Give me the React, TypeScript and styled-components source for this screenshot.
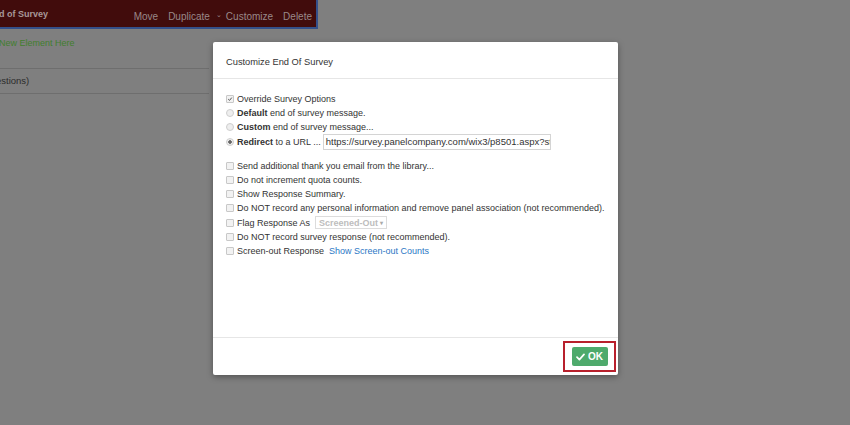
import React from "react";
import styled, { createGlobalStyle } from "styled-components";

const GlobalStyle = createGlobalStyle`
    html, body {
        margin: 0;
        padding: 0;
        background: #7f7f7f;
        font-family: "Liberation Sans", Arial, sans-serif;
    }
`;

type Option = {
    kind: "check" | "radio";
    checked?: boolean;
    bold?: string;
    text: string;
};

const topOptions: Option[] = [
    { kind: "check", checked: true, text: "Override Survey Options" },
    { kind: "radio", bold: "Default", text: " end of survey message." },
    { kind: "radio", bold: "Custom", text: " end of survey message..." },
];

const moreOptions: string[] = [
    "Send additional thank you email from the library...",
    "Do not increment quota counts.",
    "Show Response Summary.",
    "Do NOT record any personal information and remove panel association (not recommended).",
];

const CheckMark = () => (
    <svg width="9" height="8" viewBox="0 0 9 8">
        <path d="M1 4.2 L3.4 6.6 L8 1.4" fill="none" stroke="#fff" strokeWidth="1.7" strokeLinecap="round" strokeLinejoin="round" />
    </svg>
);

const TinyTick = () => (
    <svg width="6" height="6" viewBox="0 0 6 6">
        <path d="M1.2 3.1 L2.5 4.4 L4.8 1.6" fill="none" stroke="#555" strokeWidth="1" />
    </svg>
);

const App = () => {
    return (
        <Page>
            <GlobalStyle />
            <Backdrop>
                <BlockHeader>
                    <BlockTitle>d of Survey</BlockTitle>
                    <BlockActions>
                        <span>Move</span>
                        <span>Duplicate</span>
                        <Customize>
                            <Chevron>⌄</Chevron>
                            Customize
                        </Customize>
                        <span>Delete</span>
                    </BlockActions>
                </BlockHeader>
                <AddElement>New Element Here</AddElement>
                <BlockRow>estions)</BlockRow>
            </Backdrop>

            <Modal>
                <ModalHeader>Customize End Of Survey</ModalHeader>
                <ModalBody>
                    <Group>
                        {topOptions.map((opt) => (
                            <Row key={opt.text}>
                                {opt.kind === "check" ? (
                                    <Box>{opt.checked && <TinyTick />}</Box>
                                ) : (
                                    <Radio />
                                )}
                                <span>
                                    {opt.bold && <b>{opt.bold}</b>}
                                    {opt.text}
                                </span>
                            </Row>
                        ))}
                        <Row>
                            <Radio selected />
                            <span>
                                <b>Redirect</b> to a URL ...
                            </span>
                            <UrlInput>https://survey.panelcompany.com/wix3/p8501.aspx?sta</UrlInput>
                        </Row>
                    </Group>
                    <Group>
                        {moreOptions.map((t) => (
                            <Row key={t}>
                                <Box />
                                <span>{t}</span>
                            </Row>
                        ))}
                        <Row>
                            <Box />
                            <span>Flag Response As</span>
                            <Select>
                                Screened-Out <Caret>▾</Caret>
                            </Select>
                        </Row>
                        <Row>
                            <Box />
                            <span>Do NOT record survey response (not recommended).</span>
                        </Row>
                        <Row>
                            <Box />
                            <span>Screen-out Response</span>
                            <Link>Show Screen-out Counts</Link>
                        </Row>
                    </Group>
                </ModalBody>
                <ModalFooter>
                    <Highlight>
                        <OkButton>
                            <CheckMark />
                            OK
                        </OkButton>
                    </Highlight>
                </ModalFooter>
            </Modal>
        </Page>
    );
};

export default App;

const Page = styled.div`
    position: relative;
    width: 850px;
    height: 425px;
    overflow: hidden;
    background: #7f7f7f;
`;

const Backdrop = styled.div`
    display: flex;
    flex-direction: column;
    width: 320px;
`;

const BlockHeader = styled.div`
    display: flex;
    align-items: stretch;
    justify-content: space-between;
    height: 27px;
    width: 316px;
    background: #410c0c;
    border-right: 2px solid #34508a;
    border-bottom: 2px solid #34508a;
`;

const BlockTitle = styled.span`
    display: flex;
    align-items: center;
    padding-top: 1px;
    font-size: 9px;
    font-weight: 700;
    color: #a89898;
    margin-left: -1px;
`;

const BlockActions = styled.div`
    display: flex;
    align-items: flex-end;
    padding-bottom: 5px;
    gap: 10px;
    font-size: 10px;
    color: #998989;
    margin-right: 4px;
`;

const Customize = styled.span`
    display: flex;
    align-items: flex-end;
    gap: 4px;
    margin-left: -4px;
`;

const Chevron = styled.span`
    font-size: 7px;
    position: relative;
    top: -3px;
`;

const AddElement = styled.div`
    margin-top: 9px;
    height: 24px;
    font-size: 9px;
    color: #427e2e;
    margin-left: -1px;
`;

const BlockRow = styled.div`
    border-top: 1px solid #6e6e6e;
    border-bottom: 1px solid #6e6e6e;
    margin-top: 6px;
    height: 24px;
    width: 213px;
    line-height: 24px;
    font-size: 9.5px;
    color: #2c2c2c;
    margin-left: -4px;
`;

const Modal = styled.div`
    position: absolute;
    left: 213px;
    top: 42px;
    width: 405px;
    height: 333px;
    background: #fff;
    border-radius: 2px;
    box-shadow: 0 2px 6px rgba(0, 0, 0, 0.35);
    display: flex;
    flex-direction: column;
    color: #333;
`;

const ModalHeader = styled.div`
    height: 37px;
    display: flex;
    align-items: center;
    padding: 4px 13px 0;
    box-sizing: border-box;
    font-size: 9.3px;
    color: #333;
    border-bottom: 1px solid #e6e6e6;
`;

const ModalBody = styled.div`
    flex: 1;
    display: flex;
    flex-direction: column;
    gap: 10px;
    padding: 13px 13px 0;
    border-bottom: 1px solid #e6e6e6;
`;

const Group = styled.div`
    display: flex;
    flex-direction: column;
`;

const Row = styled.div`
    display: flex;
    align-items: center;
    height: 14.2px;
    font-size: 9px;
    color: #333;
    white-space: nowrap;
    b {
        font-weight: 700;
    }
`;

const Box = styled.span`
    display: flex;
    align-items: center;
    justify-content: center;
    width: 6px;
    height: 6px;
    margin-right: 3px;
    border: 1px solid #c8c8c8;
    border-radius: 1px;
    background: #f2f2f2;
    flex-shrink: 0;
`;

const Radio = styled.span<{ selected?: boolean }>`
    width: 6px;
    height: 6px;
    margin-right: 3px;
    border: 1px solid #cfcfcf;
    border-radius: 50%;
    background: ${(p) => (p.selected ? "radial-gradient(circle, #666 0 1.5px, #eee 2px)" : "#eee")};
    flex-shrink: 0;
`;

const UrlInput = styled.span`
    margin-left: 2px;
    height: 16px;
    width: 228px;
    padding: 0 2px;
    box-sizing: border-box;
    border: 1px solid #d4d4d4;
    display: flex;
    align-items: center;
    overflow: hidden;
    font-size: 9.5px;
    color: #333;
`;

const Select = styled.span`
    margin-left: 5px;
    height: 13px;
    width: 72px;
    box-sizing: border-box;
    border: 1px solid #dcdcdc;
    padding: 0 3px;
    display: flex;
    align-items: center;
    justify-content: space-between;
    color: #bdbdbd;
    font-weight: 700;
    font-size: 9px;
`;

const Caret = styled.span`
    font-size: 6px;
    color: #aaa;
`;

const Link = styled.span`
    margin-left: 5px;
    color: #2b77c5;
`;

const ModalFooter = styled.div`
    height: 37px;
    display: flex;
    align-items: center;
    justify-content: flex-end;
    padding-right: 2px;
`;

const Highlight = styled.div`
    display: flex;
    align-items: center;
    justify-content: center;
    width: 53px;
    height: 31px;
    box-sizing: border-box;
    border: 2.5px solid #b8202c;
`;

const OkButton = styled.button`
    display: flex;
    align-items: center;
    justify-content: center;
    gap: 3px;
    width: 36px;
    height: 19px;
    padding: 0;
    border: none;
    border-radius: 2px;
    background: #4eaa6c;
    color: #fff;
    font-family: "Liberation Sans", Arial, sans-serif;
    font-weight: 700;
    font-size: 10px;
`;
